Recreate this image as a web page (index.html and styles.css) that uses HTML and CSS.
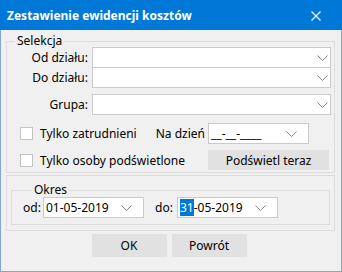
FILE: index.html
```html
<!DOCTYPE html>
<html lang="pl">
<head>
<meta charset="utf-8">
<link rel="stylesheet" href="styles.css">
</head>
<body>
<div class="window">
  <div class="titlebar">
    <span class="title">Zestawienie ewidencji kosztów</span>
    <svg class="close" width="10" height="10" viewBox="0 0 10 10"><path d="M0.5 0.5 L9.5 9.5 M9.5 0.5 L0.5 9.5" stroke="#fff" stroke-width="1.1" fill="none"/></svg>
  </div>
  <div class="client">
    <fieldset class="group selekcja">
      <legend>Selekcja</legend>
      <div class="crow">
        <span class="clabel">Od działu:</span>
        <div class="combo"><svg class="chev" width="11" height="6" viewBox="0 0 11 6"><polyline points="0.5,0.5 5.5,5.5 10.5,0.5" fill="none" stroke="#8a8a8a"/></svg></div>
      </div>
      <div class="crow stacked">
        <span class="clabel">Do działu:</span>
        <div class="combo"><svg class="chev" width="11" height="6" viewBox="0 0 11 6"><polyline points="0.5,0.5 5.5,5.5 10.5,0.5" fill="none" stroke="#8a8a8a"/></svg></div>
      </div>
      <div class="crow grupa">
        <span class="clabel">Grupa:</span>
        <div class="combo"><svg class="chev" width="11" height="6" viewBox="0 0 11 6"><polyline points="0.5,0.5 5.5,5.5 10.5,0.5" fill="none" stroke="#8a8a8a"/></svg></div>
      </div>
      <div class="checkrow first">
        <span class="cb"></span>
        <span class="cbtext">Tylko zatrudnieni</span>
        <span class="na">Na dzień</span>
        <div class="date nadate"><span class="dtext">__-__-____</span><svg class="chev" width="11" height="6" viewBox="0 0 11 6"><polyline points="0.5,0.5 5.5,5.5 10.5,0.5" fill="none" stroke="#8a8a8a"/></svg></div>
      </div>
      <div class="checkrow second">
        <span class="cb"></span>
        <span class="cbtext">Tylko osoby podświetlone</span>
        <button class="btn wide">Podświetl teraz</button>
      </div>
    </fieldset>
    <div class="panel">
      <fieldset class="group okres">
        <legend>Okres</legend>
        <div class="orow">
          <span class="olabel">od:</span>
          <div class="date"><span class="dtext">01-05-2019</span><svg class="chev" width="11" height="6" viewBox="0 0 11 6"><polyline points="0.5,0.5 5.5,5.5 10.5,0.5" fill="none" stroke="#8a8a8a"/></svg></div>
          <span class="olabel do">do:</span>
          <div class="date"><span class="dtext"><span class="sel">31</span>-05-2019</span><svg class="chev" width="11" height="6" viewBox="0 0 11 6"><polyline points="0.5,0.5 5.5,5.5 10.5,0.5" fill="none" stroke="#8a8a8a"/></svg></div>
        </div>
      </fieldset>
    </div>
    <div class="buttons">
      <button class="btn">OK</button>
      <button class="btn">Powrót</button>
    </div>
  </div>
</div>
</body>
</html>
```
FILE: styles.css
```css
* { box-sizing: border-box; }
html, body { margin: 0; padding: 0; }
body {
  font-family: "Noto Sans", "DejaVu Sans", sans-serif;
  font-size: 12px;
  color: #000;
  background: #f0f0f0;
}
.window {
  width: 342px;
  height: 272px;
  display: flex;
  flex-direction: column;
}
.titlebar {
  height: 30px;
  background: #0078d7;
  color: #fff;
  display: flex;
  align-items: center;
  padding: 0 21px 0 7px;
}
.title {
  flex: 1;
  font-weight: bold;
  font-size: 12px;
  line-height: 16px;
  padding-top: 1px;
}
.close { display: block; margin-top: 1px; }
.client {
  flex: 1;
  background: #f0f0f0;
  border: 1px solid #86a5d5;
  border-top: 0;
  padding: 0 6px 0 5px;
}
.group {
  margin: 0;
  border: 1px solid #dcdcdc;
  min-width: 0;
}
.group legend {
  padding: 0 2px;
  line-height: 12px;
  font-size: 12px;
}
.selekcja {
  margin-top: 5px;
  padding: 0 2px 2px 0;
}
.selekcja legend { margin-left: 8px; }
.crow {
  display: flex;
  align-items: center;
  height: 21px;
}
.crow.stacked { margin-top: -1px; }
.crow.grupa { margin-top: 6px; }
.clabel {
  width: 85px;
  text-align: right;
  padding-right: 4px;
}
.combo {
  width: 239px;
  height: 21px;
  background: #fff;
  border: 1px solid #cacaca;
  display: flex;
  align-items: center;
  justify-content: flex-end;
  padding-right: 2px;
}
.chev { display: block; }
.checkrow {
  display: flex;
  align-items: center;
}
.checkrow.first { margin-top: 8px; height: 21px; }
.checkrow.second { margin-top: 6px; height: 20px; }
.cb {
  width: 13px;
  height: 13px;
  margin-left: 13px;
  margin-right: 7px;
  background: #fff;
  border: 1px solid #c4c4c4;
  flex: none;
}
.cbtext { flex: 1; }
.na { margin-right: 3px; }
.date {
  width: 101px;
  height: 21px;
  background: #fff;
  border: 1px solid #cacaca;
  display: flex;
  align-items: center;
  padding: 0 11px 0 2px;
  flex: none;
}
.dtext { flex: 1; }
.nadate { margin-right: 23px; }
.btn {
  font-family: inherit;
  font-size: 12px;
  color: #000;
  background: #e1e1e1;
  border: 1px solid #e1e1e1;
  padding: 0;
  margin: 0;
  width: 75px;
  height: 23px;
}
.btn.wide {
  width: 121px;
  height: 20px;
  margin-right: 3px;
}
.panel {
  margin-top: 2px;
  border: 1px solid #dcdcdc;
  padding: 0 4px 5px 4px;
}
.okres {
  margin-top: 8px;
  padding: 1px 0 6px 11px;
}
.okres legend { margin-left: 9px; }
.orow {
  display: flex;
  align-items: center;
  height: 21px;
}
.olabel { width: 20px; }
.olabel.do { width: 22px; margin-left: 11px; }
.sel {
  background: #0078d7;
  color: #fff;
}
.buttons {
  margin-top: 3px;
  display: flex;
  justify-content: center;
  gap: 5px;
  padding-right: 3px;
}
```
